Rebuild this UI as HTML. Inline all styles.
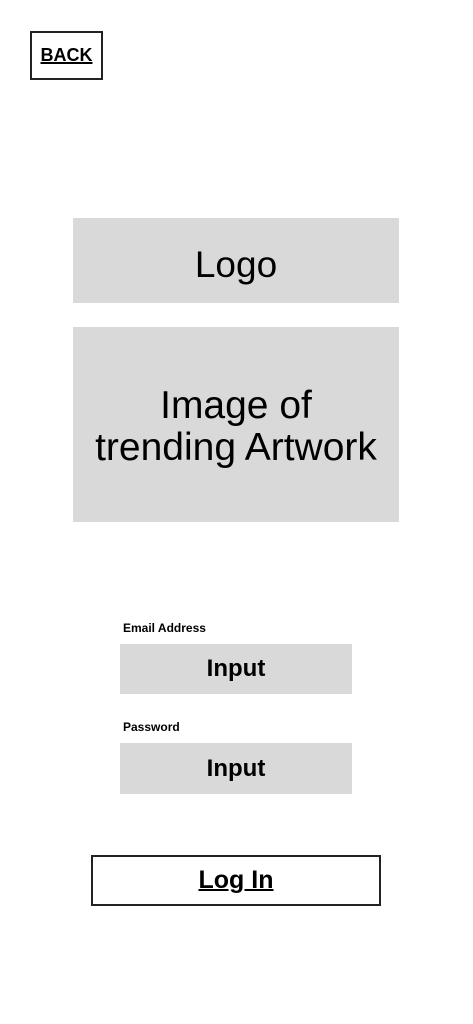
<!DOCTYPE html>
<html><head><style>
body{margin:0;width:473px;height:1024px;background:#fff;position:relative;font-family:"Liberation Sans",sans-serif;color:#000}
div{position:absolute;box-sizing:border-box}
.g{background:#d9d9d9;display:flex;align-items:center;justify-content:center;text-align:center}
.lbl{font-size:12px;font-weight:bold}
.in{font-size:24px;font-weight:bold}
</style></head><body>
<div style="left:30px;top:31px;width:73px;height:49px;border:2px solid #222;display:flex;align-items:center;justify-content:center;font-weight:bold;font-size:18px;text-decoration:underline;text-decoration-thickness:2px">BACK</div>
<div class="g" style="left:73px;top:218px;width:326px;height:85px;font-size:37px;padding-top:8px">Logo</div>
<div class="g" style="left:73px;top:327px;width:326px;height:195px;font-size:39px;line-height:42px;padding-top:4px">Image of<br>trending Artwork</div>
<div class="lbl" style="left:123px;top:621px">Email Address</div>
<div class="g in" style="left:120px;top:644px;width:232px;height:50px">Input</div>
<div class="lbl" style="left:123px;top:720px">Password</div>
<div class="g in" style="left:120px;top:743px;width:232px;height:51px">Input</div>
<div style="left:91px;top:855px;width:290px;height:51px;border:2px solid #222;display:flex;align-items:center;justify-content:center;font-weight:bold;font-size:25px;text-decoration:underline;text-decoration-thickness:2px">Log In</div>
</body></html>
